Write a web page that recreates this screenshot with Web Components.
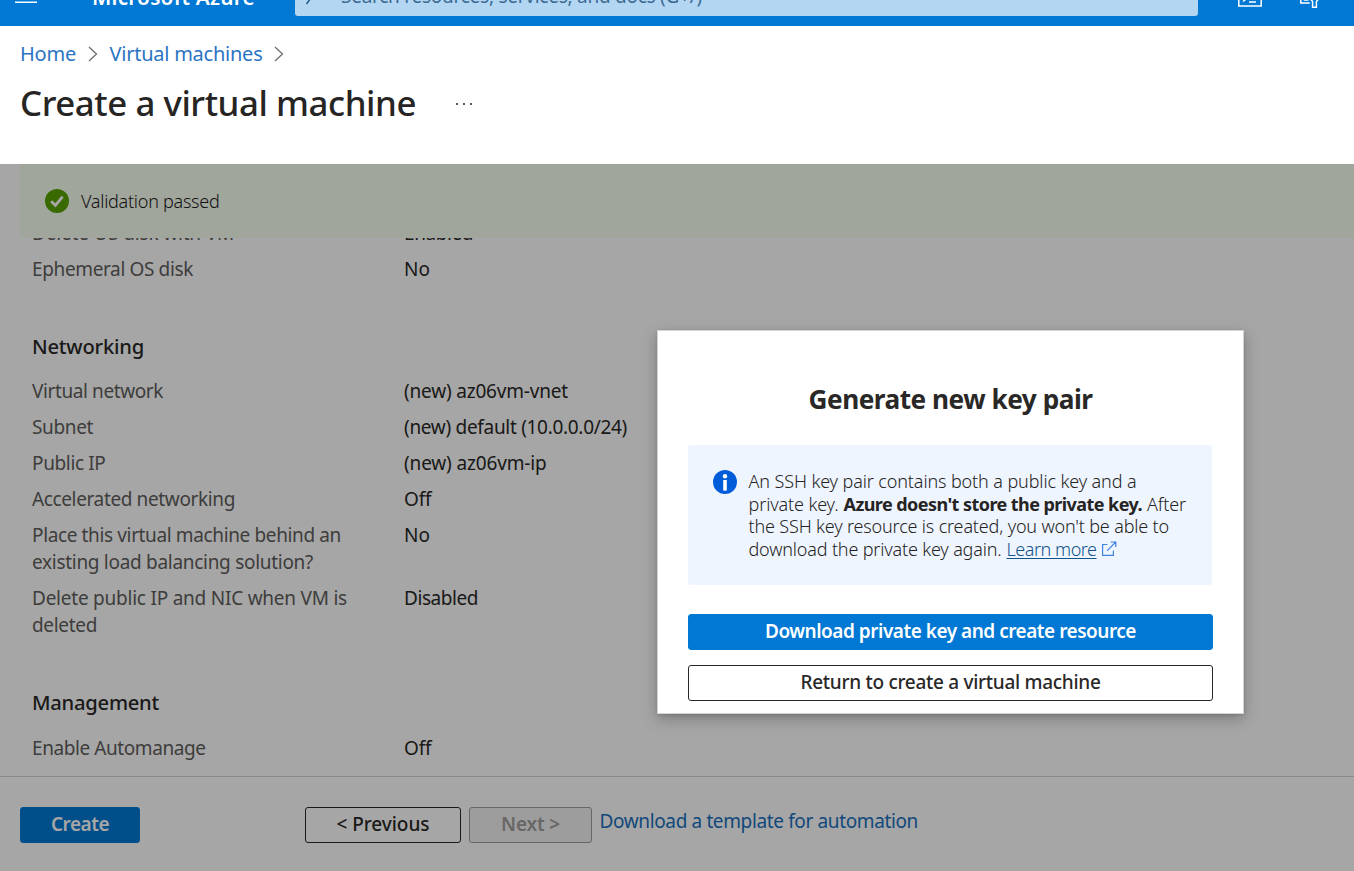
<!DOCTYPE html>
<html lang="en">
<head>
<meta charset="utf-8">
<title>Create a virtual machine - Microsoft Azure</title>
<style>
html,body{margin:0;height:100%;overflow:hidden}
body{font-family:"Noto Sans","Open Sans",sans-serif;font-size:19px;line-height:27px;color:#292827;background:#fff}
</style>
</head>
<body>
<azure-portal></azure-portal>
<script>
const define = (name, html, setup) => customElements.define(name, class extends HTMLElement {
  constructor() {
    super();
    const t = document.createElement('template');
    t.innerHTML = html;
    this.attachShadow({ mode: 'open' }).append(t.content.cloneNode(true));
  }
  connectedCallback() { if (setup) setup(this); }
});

// A single line of text whose tracking is adjusted to a given width.
define('text-line', `<style>:host{display:inline-block;white-space:nowrap}</style><slot></slot>`, el => {
  const target = parseFloat(el.getAttribute('width'));
  if (!target) return;
  const n = el.textContent.length;
  const natural = el.getBoundingClientRect().width;
  el.style.letterSpacing = ((target - natural) / n).toFixed(3) + 'px';
});

define('top-bar', `<style>
:host{display:block;height:26px;overflow:hidden;background:#0078d4;color:#fff}
.bar{display:flex;align-items:center;height:60px;margin-top:-34px;box-sizing:border-box}
.menu{width:22px;height:17px;margin-left:15px;flex:none}
.brand{margin-left:55px;width:203px;font-weight:600;font-size:20.8px;margin-top:2px}
.search{width:903px;height:40px;background:#b3d6f2;border-radius:3px;display:flex;align-items:center;color:#3d6a93;flex:none}
.search svg{margin:0 20px 0 8px}
.shell{margin-left:40px}.filter{margin-left:37px}
svg{display:block;flex:none}
</style>
<div class="bar">
<svg class="menu" viewBox="0 0 22 17" stroke="#fff" stroke-width="1.5"><path d="M0 .8h22M0 7.5h22M0 14.3h22"/></svg>
<div class="brand"><text-line width="163">Microsoft Azure</text-line></div>
<div class="search"><svg width="18" height="18" viewBox="0 0 18 18" fill="none" stroke="#1f5688" stroke-width="1.4"><circle cx="12.5" cy="5.5" r="5"/><path d="M9 9.5L3.5 17"/></svg><text-line width="361">Search resources, services, and docs (G+/)</text-line></div>
<svg class="shell" width="24" height="22" viewBox="0 0 24 22" fill="none" stroke="#fff" stroke-width="1.5"><path d="M.8 1h22.4v20H.8zM5 8l5 4.5-5 4M11 17h7"/></svg>
<svg class="filter" width="22" height="24" viewBox="0 0 22 24" fill="none" stroke="#fff" stroke-width="1.5"><path d="M1.8 4v15h9M5.5 12v4h4M10 10h10v4.5l-2.6 3v5.7h-3.8v-5.7l-2.6-3"/></svg>
</div>`);

define('page-header', `<style>
:host{display:block;height:138px;background:#fff}
nav{display:flex;align-items:center;height:27px;padding:14px 0 0 20px;color:#2b74c4;font-size:20px}
nav svg{margin:0 11.5px 0 12px}
nav svg.last{margin-left:11px}
.title{display:flex;align-items:center;height:48px;padding:13px 0 0 20px}
h1{margin:-2px 0 0;font-size:34.8px;font-weight:500;line-height:48px;color:#262524;width:435px}
</style>
<nav><text-line width="56">Home</text-line><svg width="10" height="16" viewBox="0 0 10 16" fill="none" stroke="#666" stroke-width="1.2"><path d="M1 1l7.5 7L1 15"/></svg><text-line width="153">Virtual machines</text-line><svg class="last" width="10" height="16" viewBox="0 0 10 16" fill="none" stroke="#666" stroke-width="1.2"><path d="M1 1l7.5 7L1 15"/></svg></nav>
<div class="title"><h1><text-line width="396">Create a virtual machine</text-line></h1><svg width="18" height="4" viewBox="0 0 18 4" fill="#333"><circle cx="2" cy="2" r="1.1"/><circle cx="9" cy="2" r="1.1"/><circle cx="16" cy="2" r="1.1"/></svg></div>`);

define('validation-banner', `<style>
:host{display:flex;align-items:center;height:74px;margin-left:20px;padding-left:25px;box-sizing:border-box;background:#f8fff0;font-weight:350;font-size:18px;color:#1b1a19;flex:none}
svg{margin-right:12px}
</style><svg width="24" height="24" viewBox="0 0 24 24"><circle cx="12" cy="12" r="12" fill="#57a300"/><path d="M6.2 12.2l4.2 4.3 7.2-8.8" fill="none" stroke="#fff" stroke-width="2.8"/></svg><slot></slot>`);

define('setting-row', `<style>
:host{display:flex;padding:4.5px 0}
.name{width:372px;color:#605e5c}
.value{color:#292827}
</style><div class="name"><slot name="name"></slot></div><div class="value"><slot></slot></div>`);

define('section-title', `<style>:host{display:block;margin:45.5px 0 14px;font-weight:500;font-size:20.2px}</style><slot></slot>`);

define('portal-button', `<style>
:host{display:flex;align-items:center;justify-content:center;box-sizing:border-box;height:36px;border:1px solid #292827;border-radius:3px;font-weight:500;background:#fff;flex:none;padding-bottom:1px}
:host([kind=primary]){background:#0078d4;border-color:#0078d4;color:#fff;font-weight:600}
:host([kind=disabled]){background:#f3f2f1;border-color:#a19f9d;color:#a19f9d;font-weight:600}
</style><slot></slot>`);

define('wizard-footer', `<style>
:host{display:flex;align-items:flex-start;height:95px;box-sizing:border-box;border-top:1px solid #d6d4d2;padding:30px 0 0 20px;background:#fff;flex:none}
.create{width:120px;margin-right:165px}.prev{width:156px;margin-right:8px}.next{width:123px;margin-right:7.5px}
a{color:#1a70bd;margin-top:1px}
</style>
<portal-button class="create" kind="primary"><text-line width="58">Create</text-line></portal-button>
<portal-button class="prev"><text-line width="93">&lt; Previous</text-line></portal-button>
<portal-button class="next" kind="disabled"><text-line width="59">Next &gt;</text-line></portal-button>
<a><text-line width="318.5">Download a template for automation</text-line></a>`);

define('vm-review', `<style>
:host{display:flex;flex-direction:column;height:707px;background:#fff}
.list{flex:1;min-height:0;overflow:hidden;padding-left:32px}
.inner{margin-top:-23px}
</style>
<validation-banner><text-line width="138.5">Validation passed</text-line></validation-banner>
<div class="list"><div class="inner">
<setting-row><text-line slot="name" width="202">Delete OS disk with VM</text-line><text-line width="69">Enabled</text-line></setting-row>
<setting-row><text-line slot="name" width="161">Ephemeral OS disk</text-line><text-line width="26">No</text-line></setting-row>
<section-title><text-line width="112">Networking</text-line></section-title>
<setting-row><text-line slot="name" width="131">Virtual network</text-line><text-line width="164">(new) az06vm-vnet</text-line></setting-row>
<setting-row><text-line slot="name" width="61">Subnet</text-line><text-line width="223">(new) default (10.0.0.0/24)</text-line></setting-row>
<setting-row><text-line slot="name" width="73.5">Public IP</text-line><text-line width="142.5">(new) az06vm-ip</text-line></setting-row>
<setting-row><text-line slot="name" width="203">Accelerated networking</text-line><text-line width="27.5">Off</text-line></setting-row>
<setting-row><div slot="name"><text-line width="309">Place this virtual machine behind an</text-line><br><text-line width="281">existing load balancing solution?</text-line></div><text-line width="26">No</text-line></setting-row>
<setting-row><div slot="name"><text-line width="315">Delete public IP and NIC when VM is</text-line><br><text-line width="65">deleted</text-line></div><text-line width="74">Disabled</text-line></setting-row>
<section-title><text-line width="127">Management</text-line></section-title>
<setting-row><text-line slot="name" width="173.5">Enable Automanage</text-line><text-line width="27.5">Off</text-line></setting-row>
</div></div>
<wizard-footer></wizard-footer>`);

define('info-box', `<style>
:host{display:flex;align-items:flex-start;flex:none;width:524px;height:140px;box-sizing:border-box;padding:25px 0 0 25px;background:#eff5ff;border-radius:3px;font-size:18px;line-height:22.7px;font-weight:350;color:#252423}
.icon{margin-right:11.5px;flex:none}
b{font-weight:700;color:#252423}
.text{white-space:nowrap}
a text-line{color:#0f548c;text-decoration:underline;text-underline-offset:2px;text-decoration-thickness:1px}
.ext{margin-left:4px;vertical-align:-1px}
</style>
<svg class="icon" width="24" height="24" viewBox="0 0 24 24"><circle cx="12" cy="12" r="12" fill="#015cda"/><circle cx="12" cy="6.2" r="2.2" fill="#fff"/><path d="M10.2 10h3.6v10.6h-3.6z" fill="#fff"/></svg>
<div class="text">
<div><text-line width="388">An SSH key pair contains both a public key and a</text-line></div>
<div><text-line width="90">private key.</text-line><text-line style="margin-left:5px" width="298.5"><b>Azure doesn't store the private key.</b></text-line><text-line style="margin-left:5px" width="39">After</text-line></div>
<div><text-line width="420.5">the SSH key resource is created, you won't be able to</text-line></div>
<div><text-line width="253">download the private key again.</text-line><a style="margin-left:5px"><text-line width="90">Learn more</text-line></a><svg class="ext" width="16" height="16" viewBox="0 0 16 16" fill="none" stroke="#3f83dc" stroke-width="1.2"><path d="M6.5 3.5H1.6v10.9h10.8V9.5M9.8 1h5v5M14.8 1L6 9.8"/></svg></div>
</div>`);

define('key-dialog', `<style>
:host{display:flex;flex-direction:column;box-sizing:border-box;width:587px;height:384px;background:#fff;border:1px solid #d4d4d4;box-shadow:0 5px 14px rgba(0,0,0,.25),0 1px 3px rgba(0,0,0,.12);padding:49px 30px 0}
h2{margin:0 0 28px;height:37px;line-height:38px;text-align:center;font-size:26.2px;font-weight:700;color:#292827;flex:none}
info-box{margin-bottom:29px}
portal-button{margin-bottom:15px}
</style>
<h2><text-line width="284">Generate new key pair</text-line></h2>
<info-box></info-box>
<portal-button kind="primary"><text-line width="371">Download private key and create resource</text-line></portal-button>
<portal-button><text-line width="300">Return to create a virtual machine</text-line></portal-button>`);

define('azure-portal', `<style>
:host{display:block;width:1354px;height:871px;overflow:hidden}
main{position:relative}
.shade{position:absolute;inset:0;background:rgba(0,0,0,.35)}
key-dialog{position:absolute;left:657px;top:166px}
</style>
<top-bar></top-bar><page-header></page-header>
<main><vm-review></vm-review><div class="shade"></div><key-dialog></key-dialog></main>`);
</script>
</body>
</html>
